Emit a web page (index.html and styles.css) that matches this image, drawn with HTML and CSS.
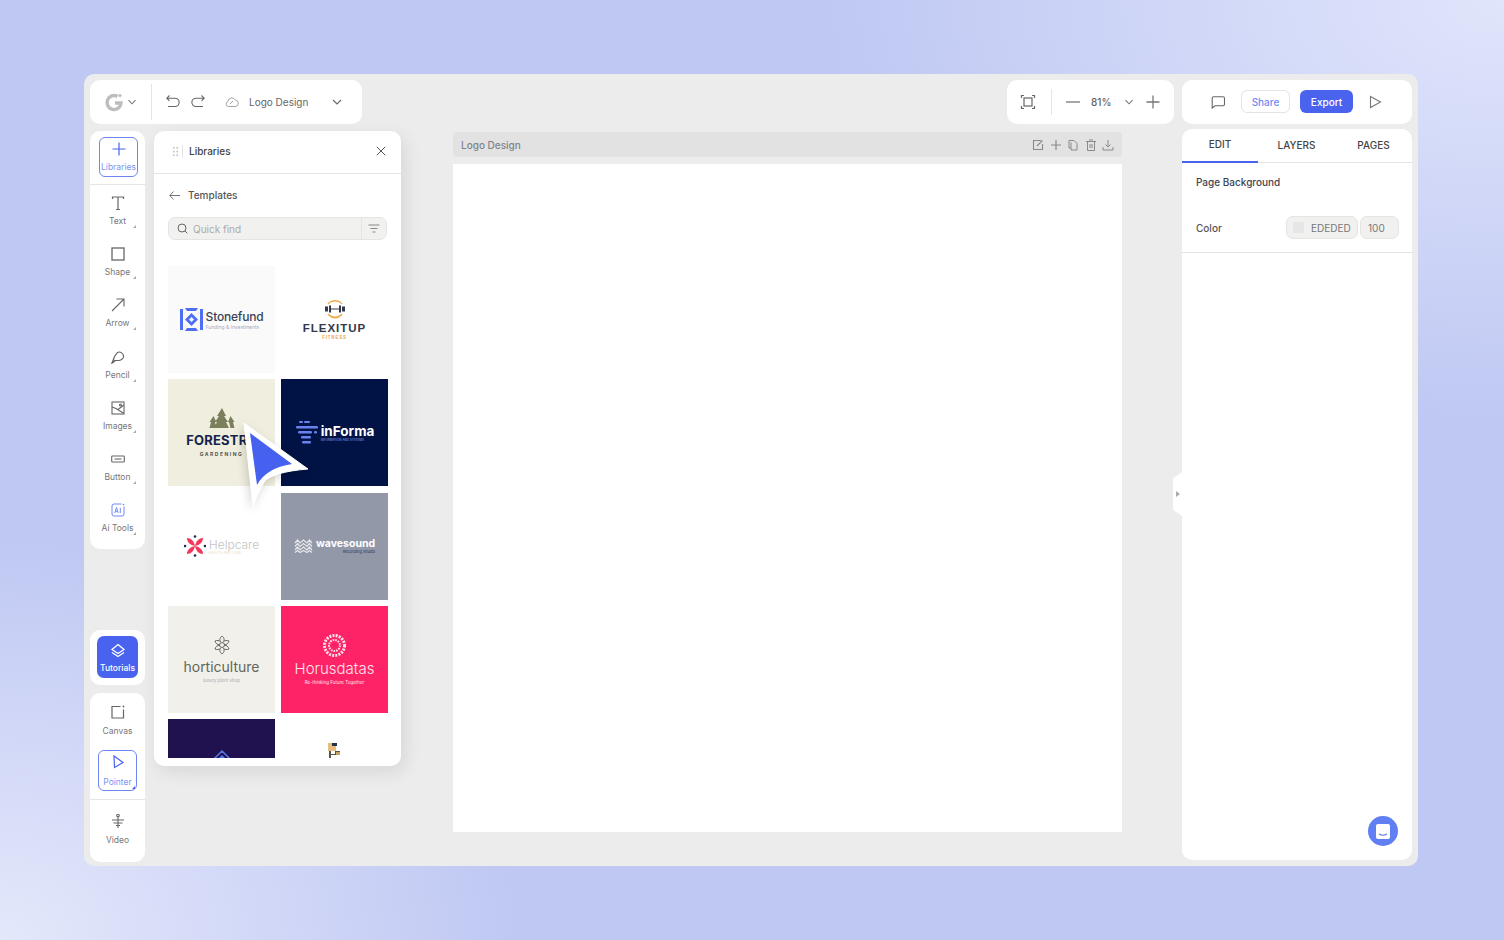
FILE: index.html
```html
<!DOCTYPE html>
<html lang="en">
<head>
  <meta charset="UTF-8"/>
  <meta name="viewport" content="width=device-width,initial-scale=1"/>
  <title>Logo Design</title>
  <link rel="stylesheet" href="styles.css">
</head>
<body>
  <div class="frame">
    <!-- top bars -->
    <div class="topbar">
      <div class="bar bar-file">
        <div class="brand">
          <svg width="20" height="20" viewBox="0 0 20 20" fill="none"><path d="M13.500 4.500A7 7 0 1 0 17 11h-6" stroke="#bdbdbd" stroke-width="3.400"/><circle cx="16" cy="3.500" r="1.600" fill="#bdbdbd"/></svg>
          <svg class="chev" width="10" height="10" viewBox="0 0 10 10" fill="none"><path d="M1.500 3.200 5 6.800l3.500-3.600" stroke="#777" stroke-width="1.100"/></svg>
        </div>
        <div class="file-tools">
          <svg width="16" height="16" viewBox="0 0 16 16" fill="none" stroke="#666" stroke-width="1.100"><path d="M4.500 1.500 1.800 4.200l2.700 2.700M2 4.200h8a3.600 3.600 0 0 1 0 8.300H3"/></svg>
          <svg width="16" height="16" viewBox="0 0 16 16" fill="none" stroke="#666" stroke-width="1.100"><path d="M11.500 1.500l2.700 2.700-2.700 2.700M14 4.200H6a3.600 3.600 0 0 0 0 8.300h7"/></svg>
          <svg class="cloud" width="14" height="12" viewBox="0 0 14 12" fill="none" stroke="#999" stroke-width=".9"><path d="M3.500 10.500a2.600 2.600 0 0 1-.4-5.100A3.800 3.800 0 0 1 10.300 4a3.300 3.300 0 0 1 .4 6.500zM5 8l3-3"/></svg>
          <span class="file-name">Logo Design</span>
          <svg class="chev-file" width="10" height="10" viewBox="0 0 10 10" fill="none"><path d="M1 3l4 4 4-4" stroke="#666" stroke-width="1.100"/></svg>
        </div>
      </div>
      <div class="bar bar-zoom">
        <svg width="16" height="16" viewBox="0 0 16 16" fill="none" stroke="#666" stroke-width="1.200"><rect x="4" y="4" width="8" height="8"/><path d="M1.500 4V1.500H4M12 1.500h2.500V4M14.500 12v2.500H12M4 14.500H1.500V12"/></svg>
        <span class="zoom-sep"></span>
        <svg width="16" height="16" viewBox="0 0 16 16" fill="none" stroke="#777" stroke-width="1.300"><path d="M1 8h14"/></svg>
        <span class="zoom-val">81%</span>
        <svg width="10" height="10" viewBox="0 0 10 10" fill="none"><path d="M1.500 3.200 5 6.800l3.500-3.600" stroke="#777" stroke-width="1.100"/></svg>
        <svg width="14" height="14" viewBox="0 0 14 14" fill="none" stroke="#777" stroke-width="1.300"><path d="M7 .5v13M.5 7h13"/></svg>
      </div>
      <div class="bar bar-share">
        <svg class="comment" width="16" height="16" viewBox="0 0 16 16" fill="none" stroke="#666" stroke-width="1.100"><path d="M3.500 2.800h9.500a1.500 1.500 0 0 1 1.500 1.500v6a1.500 1.500 0 0 1-1.500 1.500H5L2.200 14V4.300a1.500 1.500 0 0 1 1.300-1.500z"/></svg>
        <button class="btn-share">Share</button>
        <button class="btn-export">Export</button>
        <svg class="play" width="14" height="14" viewBox="0 0 14 14" fill="none" stroke="#777" stroke-width="1.100"><path d="M2.500 1.500 12.500 7l-10 5.500z"/></svg>
      </div>
    </div>

    <div class="workspace">
      <!-- left tools -->
      <div class="tools">
        <div class="tool-card">
          <div class="tool-top">
            <div class="tool tool-active">
              <svg width="14" height="14" viewBox="0 0 14 14" fill="none" stroke="#4a63ee" stroke-width="1.200"><path d="M7 .5v13M.5 7h13"/></svg>
              <span>Libraries</span>
            </div>
          </div>
          <div class="tool-list">
            <div class="tool corner">
              <svg width="14" height="14" viewBox="0 0 14 14" fill="none" stroke="#666" stroke-width="1.200"><path d="M1.500 3V1h11v2M7 1v12.500M5 13.500h4"/></svg>
              <span>Text</span>
            </div>
            <div class="tool corner">
              <svg width="14" height="14" viewBox="0 0 14 14" fill="none" stroke="#666" stroke-width="1.300"><rect x="1" y="1" width="12" height="12"/></svg>
              <span>Shape</span>
            </div>
            <div class="tool corner">
              <svg width="14" height="14" viewBox="0 0 14 14" fill="none" stroke="#666" stroke-width="1.100"><path d="M1 13 13 1M5.500 1H13v7.500"/></svg>
              <span>Arrow</span>
            </div>
            <div class="tool corner">
              <svg width="14" height="14" viewBox="0 0 14 14" fill="none" stroke="#666" stroke-width="1.200"><path d="M1 13l2.500-6.500L6.500 2.500c2.500-1.500 6.500 1 6 4.500-.3 2-3 3.500-5 3.500H4.500z"/><path d="M1 13l3-3"/></svg>
              <span>Pencil</span>
            </div>
            <div class="tool corner">
              <svg width="14" height="14" viewBox="0 0 14 14" fill="none" stroke="#666" stroke-width="1.100"><rect x="1" y="1" width="12" height="12"/><path d="M1 6l4 1.500 8 5M7 8.500l6-4.500"/><circle cx="9.500" cy="4" r="1"/></svg>
              <span>Images</span>
            </div>
            <div class="tool corner">
              <svg width="14" height="14" viewBox="0 0 14 14" fill="none" stroke="#666" stroke-width="1.100"><rect x=".7" y="4" width="12.600" height="6" rx=".8"/><path d="M3.500 7h7"/></svg>
              <span>Button</span>
            </div>
            <div class="tool corner">
              <svg width="14" height="14" viewBox="0 0 14 14" fill="none" stroke="#6f8af5" stroke-width="1"><path d="M10.500 1H3a2 2 0 0 0-2 2v8a2 2 0 0 0 2 2h8a2 2 0 0 0 2-2V3.500"/><path d="M3.800 10 5.500 4.500 7.200 10M4.400 8.300h2.200M9.300 5v5"/><circle cx="12.500" cy="1.500" r=".8" fill="#6f8af5" stroke="none"/></svg>
              <span>Ai Tools</span>
            </div>
          </div>
        </div>
        <div class="tool-card card-tutorials">
          <div class="tutorials">
            <svg width="16" height="15" viewBox="0 0 16 15" fill="none" stroke="#fff" stroke-width="1.300"><path d="M8 1.500 14 6.500 8 10.500 2 6.500z"/><path d="M2 9.500l6 4 6-4"/></svg>
            <span>Tutorials</span>
          </div>
        </div>
        <div class="tool-card card-bottom">
          <div class="tool tool-canvas">
            <svg width="14" height="14" viewBox="0 0 14 14" fill="none" stroke="#666" stroke-width="1.200"><path d="M9.500 1.500H1v11.500h11.500V4.500"/><circle cx="12.500" cy="1.500" r=".9" fill="#666" stroke="none"/></svg>
            <span>Canvas</span>
          </div>
          <div class="tool tool-active tool-pointer corner">
            <svg width="14" height="14" viewBox="0 0 14 14" fill="none" stroke="#4a63ee" stroke-width="1.200"><path d="M3 1 12 7.500 3.500 12.500z"/></svg>
            <span>Pointer</span>
          </div>
          <div class="tool tool-video">
            <svg width="16" height="16" viewBox="0 0 16 16" fill="none" stroke="#666" stroke-width="1.100"><path d="M8 3v12M2 7h12M3.500 10h9M6 12.500h4"/><circle cx="8" cy="2.500" r="1.300"/></svg>
            <span>Video</span>
          </div>
        </div>
      </div>

      <!-- libraries panel -->
      <div class="panel">
        <div class="panel-head">
          <span class="grip"></span>
          <span class="panel-title">Libraries</span>
          <svg class="close" width="10" height="10" viewBox="0 0 10 10" fill="none" stroke="#555" stroke-width="1"><path d="M.8.800l8.400 8.400M9.200.800.8 9.200"/></svg>
        </div>
        <div class="panel-sub">
          <svg width="11" height="9" viewBox="0 0 11 9" fill="none" stroke="#666" stroke-width=".9"><path d="M4.500.5.800 4.500l3.700 4M1 4.500h10"/></svg>
          <span>Templates</span>
        </div>
        <div class="search">
          <svg width="11" height="11" viewBox="0 0 11 11" fill="none" stroke="#666" stroke-width="1"><circle cx="5" cy="5" r="4"/><path d="m8 8 2.300 2.300"/></svg>
          <span class="search-text">Quick find</span>
          <span class="search-filter">
            <svg width="12" height="9" viewBox="0 0 12 9" fill="none" stroke="#888" stroke-width="1"><path d="M.5 1h11M2.500 4.500h7M4.500 8h3"/></svg>
          </span>
        </div>
        <div class="thumbs">
          <div class="thumb th-stone">
            <div class="logo-row">
              <svg width="23" height="23" viewBox="0 0 23 23" fill="#4d6ef5"><path d="M0 1h3v21H0zM20 1h3v21h-3zM5 0h13l-2 3H7zM5 23h13l-2-3H7zM11.500 5l6.500 6.500-6.500 6.500L5 11.500zM11.500 9l-2.500 2.500 2.500 2.500 2.500-2.500z" fill-rule="evenodd"/></svg>
              <div>
                <div class="stone-name">Stonefund</div>
                <div class="stone-sub">Funding &amp; Investments</div>
              </div>
            </div>
          </div>
          <div class="thumb th-flex">
            <svg width="22" height="22" viewBox="0 0 22 22" fill="none"><path d="M4 6a8 6 0 0 1 14 0M7 3.500a6 3 0 0 1 8 0M4 16a8 6 0 0 0 14 0M7 19a6 3 0 0 0 8 0" stroke="#eba94a" stroke-width="1.300"/><path d="M1 8.500h3v5H1zM18 8.500h3v5h-3zM5 7.500h2v7H5zM15 7.500h2v7h-2zM7 10.500h8v1H7z" fill="#33394d"/></svg>
            <div class="flex-name">FLEXITUP</div>
            <div class="flex-sub">FITNESS</div>
          </div>
          <div class="thumb th-forest">
            <svg width="26" height="22" viewBox="0 0 26 22" fill="#7c7f5c"><path d="M13 0l4 8h-2l4 6h-2l3 6H5l3-6H6l4-6H8zM4.500 8l3 6H6l1.500 6H.5L2 14H.5zM21.500 8l4 6H24l1.500 6h-4l-1.500-6 -1 0z"/></svg>
            <div class="forest-name">FORESTRY</div>
            <div class="forest-sub">GARDENING</div>
          </div>
          <div class="thumb th-informa">
            <div class="logo-row">
              <svg width="23" height="23" viewBox="0 0 23 23" fill="#6a82f0"><rect x="4" y="0" width="4" height="2" rx="1"/><rect x="9" y="0" width="6" height="2" rx="1"/><rect x="1" y="5" width="22" height="2.400" rx="1.200"/><rect x="3" y="10" width="14" height="2.400" rx="1.200"/><rect x="19" y="10" width="3" height="2.400" rx="1.200"/><rect x="6" y="15" width="10" height="2.400" rx="1.200"/><rect x="7" y="20" width="9" height="2.400" rx="1.200"/></svg>
              <div>
                <div class="informa-name">inForma</div>
                <div class="informa-sub">INFORMATION AND SYSTEMS</div>
              </div>
            </div>
          </div>
          <div class="thumb th-help">
            <div class="logo-row">
              <svg width="22" height="22" viewBox="0 0 22 22" fill="#f5365c"><path d="M11 11C6 10 3 7 3 3c4 0 7 3 8 8zM11 11c5-1 8-4 8-8-4 0-7 3-8 8zM11 11c-5 1-8 4-8 8 4 0 7-3 8-8zM11 11c5 1 8 4 8 8-4 0-7-3-8-8z"/><g fill="#1f2a55"><circle cx="11" cy="1.500" r="1.300"/><circle cx="11" cy="20.500" r="1.300"/><circle cx="1" cy="11" r="1.300"/><circle cx="21" cy="11" r="1.300"/></g></svg>
              <div>
                <div class="help-name">Helpcare</div>
                <div class="help-sub">HEALTH AND CARE</div>
              </div>
            </div>
          </div>
          <div class="thumb th-wave">
            <div class="logo-row">
              <svg width="19" height="14" viewBox="0 0 19 14" fill="none" stroke="#e6e7ea" stroke-width="1.200"><path d="M1 4l2.500-3L6 4l3.500-3L13 4l2.500-3L18 4M1 7.500l2.500-3L6 7.500l3.500-3L13 7.500l2.500-3 2.500 3M1 11l2.500-3L6 11l3.500-3L13 11l2.500-3 2.500 3M1 13.500l2.500-2 2.500 2 3.500-2 3.500 2 2.500-2 2.500 2"/></svg>
              <div>
                <div class="wave-name">wavesound</div>
                <div class="wave-sub">Recording Studio</div>
              </div>
            </div>
          </div>
          <div class="thumb th-hort">
            <svg width="20" height="20" viewBox="0 0 20 20" fill="none" stroke="#62665a" stroke-width="1"><path d="M10 1c2.500 2 2.500 4 1.500 5.500C13 5.500 15 5 17 6c-.5 2.500-2.500 3.500-4.500 4 2 .5 4 1.500 4.500 4-2 1-4 .5-5.500-.5 1 1.500 1 3.500-1.500 5.500-2.500-2-2.500-4-1.500-5.500C7 14.500 5 15 3 14c.5-2.500 2.500-3.500 4.500-4C5.500 9.500 3.500 8.500 3 6c2-1 4-.5 5.500.5C7.500 5 7.500 3 10 1z"/><circle cx="10" cy="10" r="2.500"/></svg>
            <div class="hort-name">horticulture</div>
            <div class="hort-sub">luxury plant shop</div>
          </div>
          <div class="thumb th-horus">
            <svg width="23" height="23" viewBox="0 0 23 23" fill="none" stroke="#ffe3ec"><circle cx="11.500" cy="11.500" r="10" stroke-width="3" stroke-dasharray="2 1.200"/><circle cx="11.500" cy="11.500" r="5.500" stroke-width="2" stroke-dasharray="1.600 1"/></svg>
            <div class="horus-name">Horusdatas</div>
            <div class="horus-sub">Re-thinking Future Together</div>
          </div>
          <div class="thumb th-house">
            <svg width="20" height="10" viewBox="0 0 20 10" fill="none" stroke="#5c77e8" stroke-width="1.500"><path d="M1 10 10 1l9 9M6 10l4-4 4 4"/></svg>
          </div>
          <div class="thumb th-figure">
            <svg width="15" height="15" viewBox="0 0 15 15"><path d="M1 0h8v8H1z" fill="#e8bd80"/><path d="M5 0h5v3H5z" fill="#27344f"/><path d="M2 8h2v7H2zM8 8h5v3H8zM3 11h8v1H3z" fill="#5a5344"/><path d="M9 9h4v3H9z" fill="#c9a15f"/></svg>
          </div>
        </div>
      </div>

      <!-- canvas -->
      <div class="stage">
        <div class="stage-head">
          <span>Logo Design</span>
          <div class="stage-icons">
            <svg width="12" height="12" viewBox="0 0 12 12" fill="none" stroke="#8a8a8a" stroke-width="1.100"><path d="M9 1.500H1.500v9h9V5M5 7l5.500-5.500"/></svg>
            <svg width="12" height="12" viewBox="0 0 12 12" fill="none" stroke="#8a8a8a" stroke-width="1.200"><path d="M6 1v10M1 6h10"/></svg>
            <svg width="12" height="12" viewBox="0 0 12 12" fill="none" stroke="#8a8a8a"><path d="M2 1.500h5l3 3v6.500H4V9H2z"/><path d="M4 3.500v5.500"/></svg>
            <svg width="12" height="12" viewBox="0 0 12 12" fill="none" stroke="#8a8a8a"><path d="M1 2.500h10M4 1h4M2.500 2.500h7V11.500h-7zM5 5v4M7 5v4"/></svg>
            <svg width="12" height="12" viewBox="0 0 12 12" fill="none" stroke="#8a8a8a"><path d="M6 1v7M3.500 5.500 6 8l2.500-2.500M1 8v3h10V8"/></svg>
          </div>
        </div>
        <div class="page"></div>
      </div>

      <!-- properties -->
      <div class="props">
        <div class="tabs">
          <span class="tab tab-on">EDIT</span>
          <span class="tab">LAYERS</span>
          <span class="tab">PAGES</span>
        </div>
        <div class="prop-section">
          <div class="prop-title">Page Background</div>
          <div class="prop-row">
            <span class="prop-label">Color</span>
            <span class="field field-color"><i class="swatch"></i>EDEDED</span>
            <span class="field field-num">100</span>
          </div>
        </div>
        <button class="chat">
          <svg width="14" height="15" viewBox="0 0 14 15"><path d="M2 0h10a2 2 0 0 1 2 2v11a2 2 0 0 1-2 2H2a2 2 0 0 1-2-2V2a2 2 0 0 1 2-2z" fill="#fff"/><path d="M3 10q4 2.500 8 0" fill="none" stroke="#5f7ff3" stroke-width="1.100"/></svg>
        </button>
      </div>
    </div>

    <div class="handle"><i></i></div>

    <svg class="big-cursor" width="70" height="90" viewBox="0 0 70 90">
      <path d="M2 3 66 49Q30 52 22 62 15 75 11 86Z" fill="#fff" stroke="#fff" stroke-width="1" stroke-linejoin="round"/>
      <path d="M8 13 50 44Q24 48 15 65Z" fill="#4661ef"/>
    </svg>
  </div>
</body>
</html>
```

FILE: styles.css
```css
*, *::before, *::after { box-sizing: border-box; margin:0; padding:0 }
html, body { height:100%; overflow:hidden }
body {
  font-family:'Inter',sans-serif;
  padding:74px 86px 74px 84px;
  color:#555;
  background:
    radial-gradient(520px 400px at 0% 100%, #e4e8fb 0%, rgba(228,232,251,0) 100%),
    radial-gradient(680px 420px at 100% 0%, #e0e5fb 0%, rgba(224,229,251,0) 100%),
    #bfc8f3;
}
.frame {
  position:relative;
  height:792px;
  background:#ececec;
  border-radius:10px;
  padding:6px;
  display:flex; flex-direction:column; gap:5px;
}

/* top bars */
.topbar { display:flex; height:44px; gap:8px }
.bar {
  background:#fff;
  border-radius:10px;
  display:flex; align-items:center;
  padding-bottom:1px;
}
.bar-file { width:272px; margin-right:auto }
.brand {
  width:62px; height:36px;
  border-right:1px solid #e4e4e4;
  display:flex; align-items:center; gap:3px;
  padding-left:14px;
}
.file-tools { flex:1; display:flex; align-items:center; padding-left:13px }
.file-tools svg:nth-child(2) { margin-left:9px }
.cloud { margin-left:19px }
.file-name { font-size:10px; color:#666; margin-left:10px }
.chev-file { margin-left:24px }
.bar-zoom { width:167px; padding-left:13px }
.zoom-sep { width:1px; height:26px; background:#e4e4e4; margin:0 13px 0 15px }
.zoom-val { font-size:10px; font-weight:500; color:#666; margin:0 13px 0 10px }
.bar-zoom svg:last-child { margin-left:12px }
.bar-share { width:230px; padding-left:28px }
.btn-share, .btn-export {
  font-family:'Inter',sans-serif;
  font-size:10px; font-weight:500;
  height:23px; border-radius:6px;
  cursor:pointer;
}
.btn-share {
  width:49px; margin-left:15px;
  color:#6f8af5;
  background:#fff;
  border:1px solid #e4e4e4;
}
.btn-export {
  width:53px; margin-left:10px;
  color:#fff;
  background:#4a63ee;
  border:none;
}
.play { margin-left:15px }

/* main row */
.workspace { flex:1; display:flex; min-height:0 }

.tools {
  width:55px;
  margin-top:2px;
  display:flex; flex-direction:column; gap:8px;
  height:731px;
}
.tool-card { background:#fff; border-radius:10px }
.tool {
  display:flex; flex-direction:column; align-items:center;
  gap:6px;
  font-size:8.500px;
  color:#777;
  position:relative;
}
.tool-top {
  height:54px;
  border-bottom:1px solid #e6e6e6;
  padding:6px 0 0 9px;
}
.tool-active {
  width:39px; height:40px;
  border:1px solid #6f86f2;
  border-radius:6px;
  color:#7d93f5;
  padding-top:4px;
  gap:6px;
}
.tool-list {
  height:364px;
  padding-top:11px;
  display:flex; flex-direction:column; gap:14.200px;
}
.tool-list .tool { height:37px; padding-top:0 }
.corner::after {
  content:'';
  position:absolute; right:9px; bottom:6px;
  border-left:3px solid transparent;
  border-bottom:3px solid #aaa;
}
.tool-list .corner::after { bottom:5px; right:9px }
.card-tutorials { margin-top:auto; height:55px; padding:6px 7px }
.tutorials {
  height:42px;
  background:#4a63ee;
  border-radius:7px;
  color:#fff;
  font-size:8.500px; font-weight:500;
  display:flex; flex-direction:column; align-items:center; justify-content:center;
  gap:5px;
  padding-top:2px;
}
.card-bottom { height:169px; padding-top:12px; display:flex; flex-direction:column }
.tool-canvas { height:45px; gap:7px }
.tool-pointer { margin-left:8px; height:41px; gap:8px }
.tool-pointer.corner::after { right:1px; bottom:1px; border-bottom-color:#4a63ee }
.tool-video {
  margin-top:8px;
  border-top:1px solid #e6e6e6;
  padding-top:13px;
}

/* libraries */
.panel {
  width:247px; height:635px;
  margin:2px 0 0 9px;
  background:#fff;
  border-radius:10px;
  box-shadow:4px 6px 18px rgba(0,0,0,.09);
  overflow:hidden;
}
.panel-head {
  height:43px;
  border-bottom:1px solid #e4e4e4;
  display:flex; align-items:center;
  padding:0 15px 2px 18px;
}
.grip {
  width:7px; height:11px;
  background:radial-gradient(circle, #c8c8c8 1px, transparent 1.100px) 0 0/3.500px 3.700px;
}
.panel-title {
  font-size:10px; font-weight:500; color:#444;
  margin-left:3px; padding-left:6px;
  border-left:1px solid #e4e4e4;
  line-height:13px;
  flex:1;
}
.panel-sub {
  display:flex; align-items:center; gap:8px;
  padding:11px 0 0 15px;
  height:31px;
  font-size:10px; font-weight:500; color:#555;
}
.search {
  height:23px;
  margin:12px 14px 0;
  background:#f1f1ef;
  border:1px solid #e4e4e4;
  border-radius:7px;
  display:flex; align-items:center;
  padding-left:8px;
}
.search-text { flex:1; font-size:10px; color:#aaa; margin-left:5px }
.search-filter {
  width:25px; height:100%;
  border-left:1px solid #e4e4e4;
  display:flex; align-items:center; justify-content:center;
}
.thumbs {
  height:492px;
  margin:26px 13px 0 14px;
  display:grid;
  grid-template-columns:107px 107px;
  grid-auto-rows:107px;
  gap:6.250px 6px;
  overflow:hidden;
}
.thumb {
  display:flex; flex-direction:column; align-items:center; justify-content:center;
  overflow:hidden;
  text-align:left;
}
.logo-row { display:flex; align-items:center; gap:3px }
.th-stone { background:#fafafa }
.stone-name { font-size:12px; font-weight:500; color:#3a4258; letter-spacing:-.2px; line-height:14px }
.stone-sub { font-size:5px; color:#aab; line-height:6px }
.th-flex { background:#fff; padding-bottom:2px }
.flex-name { font:700 11.500px 'Liberation Sans',sans-serif; letter-spacing:1px; color:#33394d; margin-top:2px }
.flex-sub { font:700 4.500px 'Liberation Sans',sans-serif; letter-spacing:.8px; color:#eba94a; margin-top:1px }
.th-forest { background:#f0eede }
.forest-name { font-size:13px; font-weight:700; color:#14234a; letter-spacing:.2px; line-height:15px; margin-top:3px }
.forest-sub { font-size:5px; font-weight:700; letter-spacing:1.500px; color:#555; margin-top:3px }
.th-informa { background:#011245 }
.informa-name { font-size:13.500px; font-weight:700; color:#fff; line-height:14px }
.informa-sub { font-size:3px; color:#8fa0f0 }
.th-help { background:#fff }
.help-name { font-size:12px; font-weight:300; color:#c4c4c4; line-height:13px }
.help-sub { font-size:3.500px; color:#eadcc4 }
.th-wave { background:#9298a8 }
.wave-name { font-size:10.500px; font-weight:700; color:#fff; line-height:11px }
.wave-sub { font-size:4px; color:#26355c; text-align:right }
.th-hort { background:#f2f0eb }
.hort-name { font-size:14px; color:#62665a; line-height:16px; margin-top:4px }
.hort-sub { font-size:4.500px; font-style:italic; color:#aaa; margin-top:3px }
.th-horus { background:#fe2366; color:#ffe3ec }
.horus-name { font-size:15px; font-weight:300; line-height:18px; margin-top:3px }
.horus-sub { font-size:4.500px; margin-top:2px }
.th-house { background:#20124f; justify-content:flex-start; padding-top:31px }
.th-figure { background:#fff; justify-content:flex-start; padding-top:24px }

/* canvas */
.stage { width:669px; margin:3px 0 0 52px }
.stage-head {
  height:25px;
  background:#e2e2e2;
  border-radius:4px;
  display:flex; align-items:center; justify-content:space-between;
  padding:1px 8px 0;
  font-size:10px; font-weight:500; color:#80848c;
}
.stage-icons { display:flex; gap:5.500px; margin-top:-1px }
.page { height:668px; background:#fff; margin-top:7px }

/* properties */
.props {
  position:relative;
  width:230px; height:731px;
  margin-left:60px;
  background:#fff;
  border-radius:10px;
}
.tabs {
  height:34px;
  display:grid; grid-template-columns:76px 1fr 1fr;
  border-bottom:1px solid #e4e4e4;
}
.tab {
  display:flex; align-items:center; justify-content:center;
  font-size:10px; font-weight:500; color:#444;
  padding-bottom:2px;
}
.tab-on { border-bottom:2px solid #4a63ee; height:34px }
.prop-section {
  height:90px;
  border-bottom:1px solid #e4e4e4;
  padding:13px 13px 0 14px;
}
.prop-title { font-size:10px; font-weight:500; color:#3d4452; line-height:13px }
.prop-row { display:flex; align-items:center; margin-top:27px }
.prop-label { flex:1; font-size:10px; font-weight:500; color:#555 }
.field {
  height:23px;
  background:#f1f1ef;
  border:1px solid #e4e4e4;
  border-radius:7px;
  font-size:10px; color:#777;
  display:flex; align-items:center;
}
.field-color { width:72px; padding-left:6px }
.swatch { width:11px; height:11px; background:#e6e6e6; margin-right:7px }
.field-num { width:39px; margin-left:2px; padding-left:7px }
.chat {
  position:absolute; right:14px; bottom:14px;
  width:30px; height:30px;
  border:none; border-radius:50%;
  background:#5f7ff3;
  display:flex; align-items:center; justify-content:center;
}

/* overlays */
.handle {
  position:absolute; left:1089px; top:398px;
  width:9px; height:44px;
  background:#fff;
  clip-path:polygon(0 14%, 100% 0, 100% 100%, 0 86%);
  display:flex; align-items:center; justify-content:center;
}
.handle i {
  border-left:4px solid #aaa;
  border-top:3px solid transparent;
  border-bottom:3px solid transparent;
}
.big-cursor {
  position:absolute; left:158px; top:346px;
  filter:drop-shadow(-2px 3px 5px rgba(0,0,0,.16));
}
```
